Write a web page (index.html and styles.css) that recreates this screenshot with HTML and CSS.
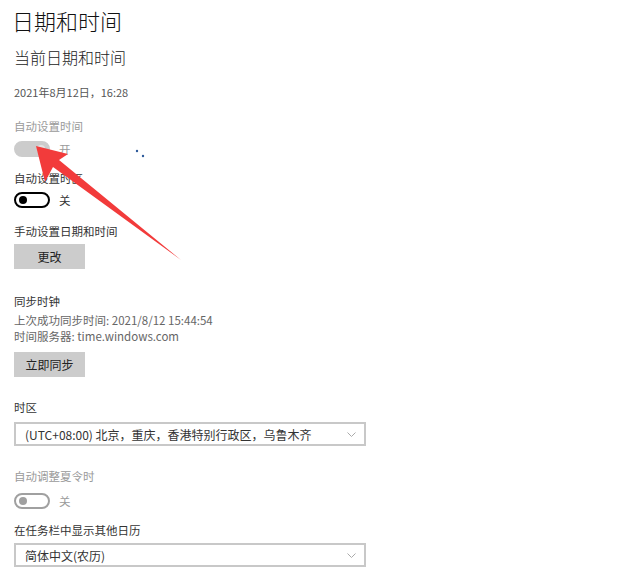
FILE: index.html
```html
<!DOCTYPE html>
<html lang="zh-CN">

<head>
    <meta charset="UTF-8">
    <meta name="viewport" content="width=device-width, initial-scale=1.0">
    <title>日期和时间</title>
    <link rel="stylesheet" href="styles.css">
</head>

<body>
    <div class="page">
        <h1 class="title">日期和时间</h1>
        <h2 class="subtitle">当前日期和时间</h2>
        <p class="date">2021年8月12日，16:28</p>

        <p class="label disabled first">自动设置时间</p>
        <div class="toggle-row disabled t1">
            <span class="toggle on"><i></i></span>
            <span class="state">开</span>
        </div>

        <p class="label gap-x">自动设置时区</p>
        <div class="toggle-row t2">
            <span class="toggle"><i></i></span>
            <span class="state">关</span>
        </div>

        <p class="label gap-s">手动设置日期和时间</p>
        <button class="btn">更改</button>

        <p class="label gap-l">同步时钟</p>
        <p class="info first-info">上次成功同步时间: 2021/8/12 15:44:54</p>
        <p class="info">时间服务器: time.windows.com</p>
        <button class="btn btn-sync">立即同步</button>

        <p class="label gap-m">时区</p>
        <div class="select">
            <span>(UTC+08:00) 北京，重庆，香港特别行政区，乌鲁木齐</span>
            <svg class="chevron" width="9" height="5" viewBox="0 0 9 5"><path d="M0.5 0.5 L4.5 4.5 L8.5 0.5" fill="none" stroke="#aaa" stroke-width="1"/></svg>
        </div>

        <p class="label disabled gap-m">自动调整夏令时</p>
        <div class="toggle-row disabled t3">
            <span class="toggle"><i></i></span>
            <span class="state">关</span>
        </div>

        <p class="label gap-x">在任务栏中显示其他日历</p>
        <div class="select select-cal">
            <span>简体中文(农历)</span>
            <svg class="chevron" width="9" height="5" viewBox="0 0 9 5"><path d="M0.5 0.5 L4.5 4.5 L8.5 0.5" fill="none" stroke="#aaa" stroke-width="1"/></svg>
        </div>
    </div>

    <!-- 标注箭头 -->
    <svg class="mark" width="623" height="582" viewBox="0 0 623 582">
        <path d="M36 146 L68 154 L59 160 L181 260 L53 167 L45 182 Z" fill="#f23b3b"/>
        <circle cx="137" cy="151" r="1.2" fill="#2d5a9a"/>
        <circle cx="143" cy="156" r="1.2" fill="#2d5a9a"/>
    </svg>
</body>

</html>
```

FILE: styles.css
```css
* {
    margin: 0;
    padding: 0;
    box-sizing: border-box;
}

body {
    background: #ffffff;
    color: #000000;
    font-family: "Noto Sans CJK SC", "Noto Sans", sans-serif;
    position: relative;
    width: 623px;
    height: 582px;
    overflow: hidden;
}

.page {
    padding: 0 14px;
}

.title {
    font-size: 22px;
    font-weight: 300;
    line-height: 40px;
    margin-left: -2px;
    color: #111111;
}

.subtitle {
    font-size: 16px;
    font-weight: 300;
    line-height: 24px;
    margin-top: 5px;
    color: #222222;
}

.date {
    font-size: 11px;
    line-height: 16px;
    margin-top: 15px;
    color: #555555;
}

.label {
    font-size: 11.5px;
    line-height: 16px;
    color: #333333;
}

.label.disabled {
    color: #9a9a9a;
}

.first {
    margin-top: 18px;
}

.gap-x {
    margin-top: 13px;
}

.gap-s {
    margin-top: 15px;
}

.gap-l {
    margin-top: 24px;
}

.gap-m {
    margin-top: 22px;
}

/* 开关 */
.toggle-row {
    display: flex;
    align-items: center;
    height: 16px;
}

.toggle-row.t1 {
    margin-top: 7px;
}

.toggle-row.t2 {
    margin-top: 6px;
}

.toggle-row.t3 {
    margin-top: 9px;
}

.toggle {
    position: relative;
    width: 36px;
    height: 16px;
    border: 2px solid #000000;
    border-radius: 8px;
}

.toggle > i {
    position: absolute;
    left: 3px;
    top: 2px;
    width: 8px;
    height: 8px;
    border-radius: 50%;
    background: #000000;
}

.toggle-row.disabled .toggle {
    border-color: #a0a0a0;
}

.toggle-row.disabled .toggle > i {
    background: #a0a0a0;
}

.toggle-row.disabled .toggle.on {
    background: #cccccc;
    border-color: #cccccc;
}

.toggle-row.disabled .toggle.on > i {
    left: auto;
    right: 3px;
    background: #e4e4e4;
}

.state {
    font-size: 11.5px;
    margin-left: 9px;
    color: #333333;
}

.toggle-row.disabled .state {
    color: #9a9a9a;
}

/* 按钮 */
.btn {
    display: block;
    width: 71px;
    height: 25px;
    margin-top: 5px;
    border: none;
    background: #cccccc;
    color: #222222;
    font-family: inherit;
    font-size: 12px;
}

.btn-sync {
    margin-top: 8px;
}

.info {
    font-size: 11.5px;
    line-height: 16px;
    color: #666666;
}

.first-info {
    margin-top: 3px;
}

/* 下拉框 */
.select {
    display: flex;
    align-items: center;
    justify-content: space-between;
    width: 352px;
    height: 24px;
    margin-top: 7px;
    padding: 0 8px 0 9px;
    border: 2px solid #c8c8c8;
    font-size: 12px;
    color: #333333;
}

.select-cal {
    margin-top: 5px;
}

.chevron {
    display: block;
}

.mark {
    position: absolute;
    left: 0;
    top: 0;
    pointer-events: none;
}
```
